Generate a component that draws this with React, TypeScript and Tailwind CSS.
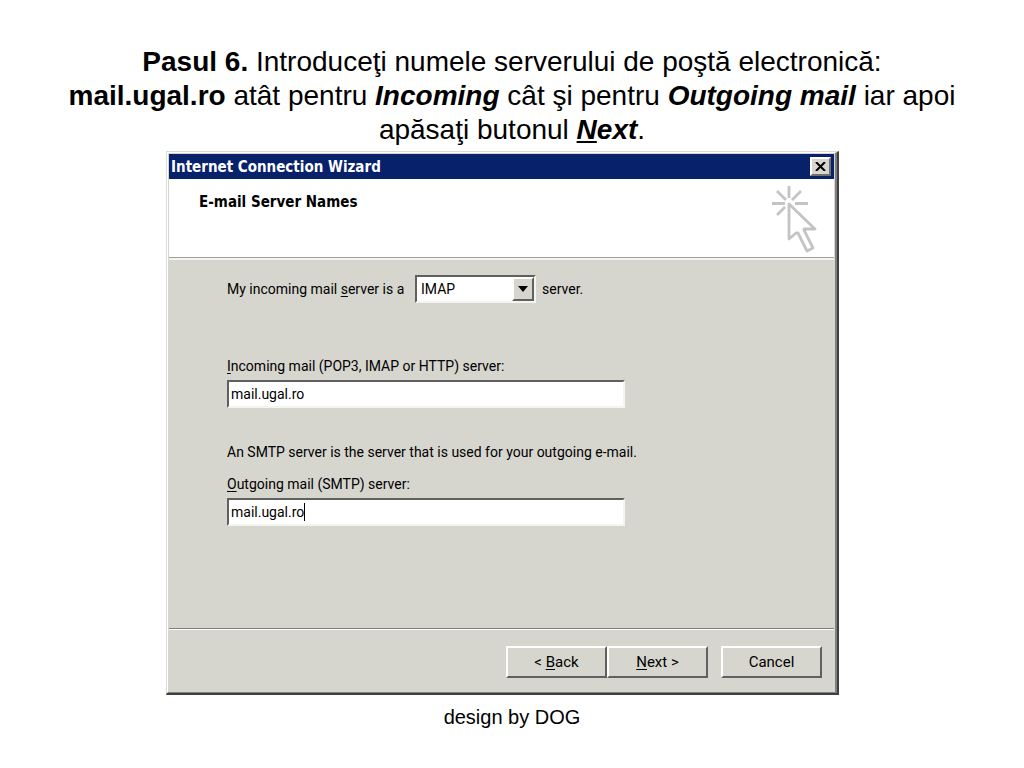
import { useState } from 'react';

const BUTTON =
  'h-8 w-[101px] bg-[#d6d6ce] border-t-2 border-l-2 border-r-2 border-b-2 border-t-white border-l-white border-r-[#606060] border-b-[#606060] text-[15px] leading-5 text-black';

const FIELD =
  'border-t-2 border-l-2 border-r-2 border-b-2 border-t-[#606060] border-l-[#606060] border-r-[#f4f4f0] border-b-[#f4f4f0] bg-white';

function WizardCursor() {
  return (
    <svg className="h-[68px] w-12" viewBox="0 0 48 68" fill="none" stroke="#c4c4c4" strokeWidth="2.8" aria-hidden="true">
      <path d="M19 1v12M2 18.500h13M25 18.500h13M7 6l9 9M31 6l-9 9M7 30l8-8" />
      <path d="M19 19v35l7-6h2l9 18 6-3-9-18v-1h11z" strokeLinejoin="round" />
    </svg>
  );
}

interface ServerFieldProps {
  id: string;
  accessKey: string;
  label: string;
  value: string;
  onChange: (value: string) => void;
  caret?: boolean;
}

function ServerField({ id, accessKey, label, value, onChange, caret }: ServerFieldProps) {
  return (
    <div>
      <label htmlFor={id} className="block">
        <u className="underline-offset-2">{accessKey}</u>
        {label}
      </label>
      <div className="relative mt-1 max-w-[398px]">
        <input
          id={id}
          type="text"
          value={value}
          onChange={e => onChange(e.target.value)}
          className={`block h-7 w-full px-[2px] outline-none ${FIELD}`}
        />
        {caret && <span className="absolute left-[77px] top-[5px] h-[18px] w-px bg-black" />}
      </div>
    </div>
  );
}

export default function App() {
  const [protocol, setProtocol] = useState('IMAP');
  const [incoming, setIncoming] = useState('mail.ugal.ro');
  const [outgoing, setOutgoing] = useState('mail.ugal.ro');

  return (
    <main className="min-h-screen bg-white pt-[45px] font-['Liberation_Sans',Arial,sans-serif] text-black">
      <h1 className="mx-auto max-w-[900px] text-center text-[28px] leading-[34px]">
        <b>Pasul 6.</b> Introduceţi numele serverului de poştă electronică:{' '}
        <b>mail.ugal.ro</b> atât pentru <b><i>Incoming</i></b> cât şi pentru <b><i>Outgoing mail</i></b> iar apoi
        {' '}apăsaţi butonul <b><i><u>N</u>ext</i></b>.
      </h1>

      {/* Wizard window */}
      <div className="pr-[19px] pt-1">
        <section
          aria-label="Internet Connection Wizard"
          className="mx-auto max-w-[673px] border-t border-l border-r-2 border-b-2 border-t-[#dcdcd6] border-l-[#dcdcd6] border-r-[#404040] border-b-[#404040] font-[Roboto,'Liberation_Sans',sans-serif] text-[14px] leading-5"
        >
          <div className="border-t border-l border-r-2 border-b border-t-white border-l-white border-r-[#808080] border-b-[#808080] bg-[#d6d6ce] pt-px pl-px pr-px">
            <header className="flex h-[25px] items-center justify-between bg-[#08216b] pl-[2px] pr-[3px]">
              <h2 className="font-['DejaVu_Sans_Condensed','DejaVu_Sans',sans-serif] text-[15px] font-bold text-white">
                Internet Connection Wizard
              </h2>
              <button
                type="button"
                aria-label="Close"
                className="flex h-[19px] w-[21px] items-center justify-center border-2 border-t-white border-l-white border-r-[#707070] border-b-[#707070] bg-[#d6d6ce]"
              >
                <svg className="h-[9px] w-[11px]" viewBox="0 0 11 9" stroke="#000" strokeWidth="2" aria-hidden="true">
                  <path d="M1 0l9 9M10 0l-9 9" />
                </svg>
              </button>
            </header>

            <div className="flex h-[79px] justify-between border-b border-b-[#a0a09a] bg-white pt-[6px] pl-[30px] pr-4">
              <h3 className="pt-[7px] font-['DejaVu_Sans_Condensed','DejaVu_Sans',sans-serif] text-[15px] font-bold">
                E-mail Server Names
              </h3>
              <WizardCursor />
            </div>

            <form
              className="h-[370px] border-t-2 border-t-[#f4f4f0] pt-[15px] pl-[58px]"
              onSubmit={e => e.preventDefault()}
            >
              <div className="flex items-center">
                <label htmlFor="protocol" className="w-[188px]">
                  My incoming mail <u className="underline-offset-2">s</u>erver is a
                </label>
                <div className="relative w-[121px]">
                  <select
                    id="protocol"
                    value={protocol}
                    onChange={e => setProtocol(e.target.value)}
                    className={`block h-7 w-full appearance-none px-1 outline-none ${FIELD}`}
                  >
                    <option>POP3</option>
                    <option>IMAP</option>
                    <option>HTTP</option>
                  </select>
                  <span className="pointer-events-none absolute top-[2px] right-[2px] flex h-6 w-[22px] items-center justify-center border-2 border-t-white border-l-white border-r-[#606060] border-b-[#606060] bg-[#d6d6ce]">
                    <svg className="h-[6px] w-[10px]" viewBox="0 0 10 6" aria-hidden="true">
                      <path d="M0 0h10L5 6z" fill="#000" />
                    </svg>
                  </span>
                </div>
                <span className="pl-[6px]">server.</span>
              </div>

              <div className="mt-[53px]">
                <ServerField id="incoming" accessKey="I" label="ncoming mail (POP3, IMAP or HTTP) server:" value={incoming} onChange={setIncoming} />
              </div>
              <p className="mt-[34px] mb-3">An SMTP server is the server that is used for your outgoing e-mail.</p>
              <ServerField id="outgoing" accessKey="O" label="utgoing mail (SMTP) server:" value={outgoing} onChange={setOutgoing} caret />
            </form>

            <footer className="flex h-16 justify-end border-t border-t-[#808080] pt-[17px] pr-3 shadow-[inset_0_1px_0_#ffffff]">
              <button type="button" className={BUTTON}>
                &lt; <u className="underline-offset-2">B</u>ack
              </button>
              <button type="button" className={BUTTON}>
                <u className="underline-offset-2">N</u>ext &gt;
              </button>
              <button type="button" className={`ml-[13px] ${BUTTON}`}>
                Cancel
              </button>
            </footer>
          </div>
        </section>
      </div>

      <p className="pt-[10px] text-center text-[20px] leading-6">design by DOG</p>
    </main>
  );
}
